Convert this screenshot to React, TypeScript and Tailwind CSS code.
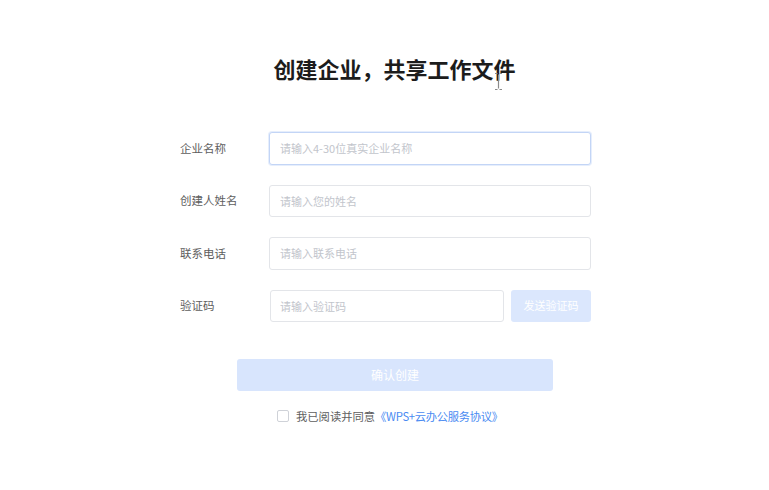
import { useState } from "react";

const font = "font-['Noto_Sans_CJK_SC','Noto_Sans',sans-serif]";

function Field({ label, placeholder, focused }: { label: string; placeholder: string; focused?: boolean }) {
  return (
    <div className="flex items-center h-[32.5px]">
      <label className="w-[89px] shrink-0 text-[11.5px] text-[#5e5e5e]">{label}</label>
      <input
        placeholder={placeholder}
        className={
          "flex-1 h-full rounded-[3px] px-[10px] text-[11px] outline-none placeholder:text-[#c2c5cc] bg-white " +
          (focused ? "border border-[#c3d5f6] shadow-[0_0_0_1px_#e6eefc]" : "border border-[#e3e5e9]")
        }
      />
    </div>
  );
}

export default function App() {
  const [agree, setAgree] = useState(false);

  return (
    <div className={`relative w-[769px] h-[490px] bg-white ${font}`}>
      <div className="ml-[180px] w-[411px] pt-[52px]">
        {/* Title */}
        <h1 className="pl-[18px] text-center text-[22px] leading-[32px] font-bold text-[#1c1c1c]">
          创建企业，共享工作文件
        </h1>

        {/* Form rows */}
        <div className="mt-[48px] flex flex-col gap-5">
          <Field label="企业名称" placeholder="请输入4-30位真实企业名称" focused />
          <Field label="创建人姓名" placeholder="请输入您的姓名" />
          <Field label="联系电话" placeholder="请输入联系电话" />
          <div className="flex items-center h-[32px]">
            <label className="w-[90px] shrink-0 text-[11.5px] text-[#5e5e5e]">验证码</label>
            <input
              placeholder="请输入验证码"
              className="w-[234px] h-full rounded-[3px] px-[9px] text-[11px] outline-none placeholder:text-[#c2c5cc] border border-[#e3e5e9]"
            />
            <button className="ml-[7px] flex-1 h-full rounded-[3px] bg-[#dbe7fd] text-white text-[11px]">
              发送验证码
            </button>
          </div>
        </div>

        {/* Submit */}
        <button className="mt-[37px] ml-[57px] w-[316px] h-[32px] rounded-[3px] bg-[#d8e5fd] text-white text-[12px]">
          确认创建
        </button>

        {/* Agreement */}
        <div className="mt-[18px] ml-[97px] flex items-center text-[11.3px] leading-[14px]">
          <button
            onClick={() => setAgree(!agree)}
            className="w-[12px] h-[12px] rounded-[2px] border border-[#cfd2d8] bg-white mr-[7px]"
          />
          <span className="text-[#5e5e5e]">我已阅读并同意</span>
          <span className="text-[#4a8bf2] tracking-[-0.3px]">《WPS+云办公服务协议》</span>
        </div>
      </div>

      {/* text cursor */}
      <svg className="absolute left-[494px] top-[72px]" width="9" height="19" viewBox="0 0 9 19">
        <path d="M1 1.5h2.5M5.5 1.5H8M4.5 2.5v14M1 17.5h2.5M5.5 17.5H8" stroke="#8a8a8a" strokeWidth="1.2" fill="none" />
      </svg>
    </div>
  );
}
